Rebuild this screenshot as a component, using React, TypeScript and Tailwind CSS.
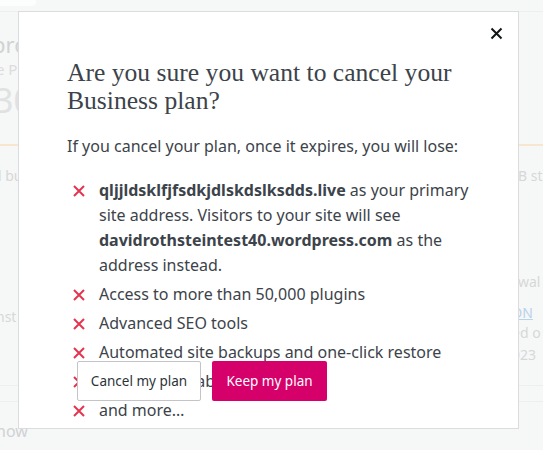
import React from "react";

const X = () => (
  <svg width="12" height="12" viewBox="0 0 12 12" className="shrink-0 mt-[7px]">
    <path d="M1 1 L11 11 M11 1 L1 11" stroke="#e6344f" strokeWidth="2" fill="none" />
  </svg>
);

const faint = "text-[14px] leading-[20px] text-[#d6d7d8] whitespace-nowrap";

export default function App() {
  const items: React.ReactNode[] = [
    <>
      <b className="font-bold">qljjldsklfjfsdkjdlskdslksdds.live</b> as your primary site address. Visitors to your site will see{" "}
      <b className="font-bold">davidrothsteintest40.wordpress.com</b> as the address instead.
    </>,
    <>Access to more than 50,000 plugins</>,
    <>Advanced SEO tools</>,
    <>Automated site backups and one-click restore</>,
    <>SFTP and database access</>,
    <>and more…</>,
  ];
  return (
    <div className="relative w-[543px] h-[450px] overflow-hidden bg-[#f6f7f7]" style={{ fontFamily: '"Noto Sans", sans-serif' }}>
      {/* faded page behind the dialog */}
      <div className="flex flex-col h-full">
        <div className="h-[12px] border-b border-[#eceeef] flex">
          <div className="w-[36px] h-[6px] rounded-br bg-white/70" />
        </div>
        <div className="flex justify-between h-[134px] border-b-2 border-[#f8e6cf]">
          <div className="flex flex-col -ml-[8px] pt-[18px]">
            <span className="text-[22px] leading-[28px] text-[#d0d2d4]">pro</span>
            <span className="text-[15px] leading-[22px] ml-[4px] text-[#dcdcde]">e Pl</span>
            <span className="text-[34px] leading-[40px] ml-[2px] text-[#e0e1e2]">30</span>
          </div>
        </div>
        <div className="flex justify-between pt-[20px]">
          <span className={faint + " -ml-[2px]"}>l bu</span>
          <span className={faint + " w-[25px]"}>B st</span>
        </div>
        <div className="flex justify-between h-[199px] pt-[86px]">
          <span className={faint + " -ml-[4px] mt-[35px]"}>nst</span>
          <div className="flex flex-col w-[31px]">
            <span className={faint + " ml-[6px]"}>wal</span>
            <span className="text-[14px] leading-[20px] mt-[11px] text-[#b9d3ea] underline whitespace-nowrap">DN</span>
            <span className={faint}>ed o</span>
            <span className={faint + " mt-[2px]"}>023</span>
          </div>
        </div>
        <div className="h-[17px] border-y border-[#eceeef]" />
        <span className="text-[16px] leading-[24px] -ml-[4px] mt-[17px] text-[#d0d2d4]">now</span>
      </div>

      {/* dialog */}
      <div className="absolute left-[18px] top-[11px] w-[501px] h-[418px] bg-white border border-[#dcdcde] text-[#3c434a]">
        <button className="absolute right-[15px] top-[15px] w-[13px] h-[13px]">
          <svg width="13" height="13" viewBox="0 0 13 13">
            <path d="M1.5 1.5 L11.5 11.5 M11.5 1.5 L1.5 11.5" stroke="#101517" strokeWidth="2" fill="none" />
          </svg>
        </button>
        <div className="pl-[48px] pr-[40px] pt-[47px]">
          <h1 className="text-[25.6px] leading-[28px] text-[#3c434a]" style={{ fontFamily: '"Liberation Serif", serif' }}>
            Are you sure you want to cancel your Business plan?
          </h1>
          <p className="mt-[19px] text-[16px] leading-[24px]">If you cancel your plan, once it expires, you will lose:</p>
          <ul className="mt-[20px] pl-[6px] flex flex-col gap-[4px]">
            {items.map((it, i) => (
              <li key={i} className="flex gap-[14px] text-[16px] leading-[25px]">
                <X />
                <span>{it}</span>
              </li>
            ))}
          </ul>
        </div>
        <div className="absolute left-[58px] top-[349px] flex gap-[11px]">
          <button className="h-[40px] w-[124px] bg-white border border-[#c3c4c7] rounded-[2px] text-[13.5px] text-[#2c3338]">Cancel my plan</button>
          <button className="h-[40px] w-[115px] bg-[#d6006b] rounded-[2px] text-[13.5px] text-white">Keep my plan</button>
        </div>
      </div>
    </div>
  );
}
